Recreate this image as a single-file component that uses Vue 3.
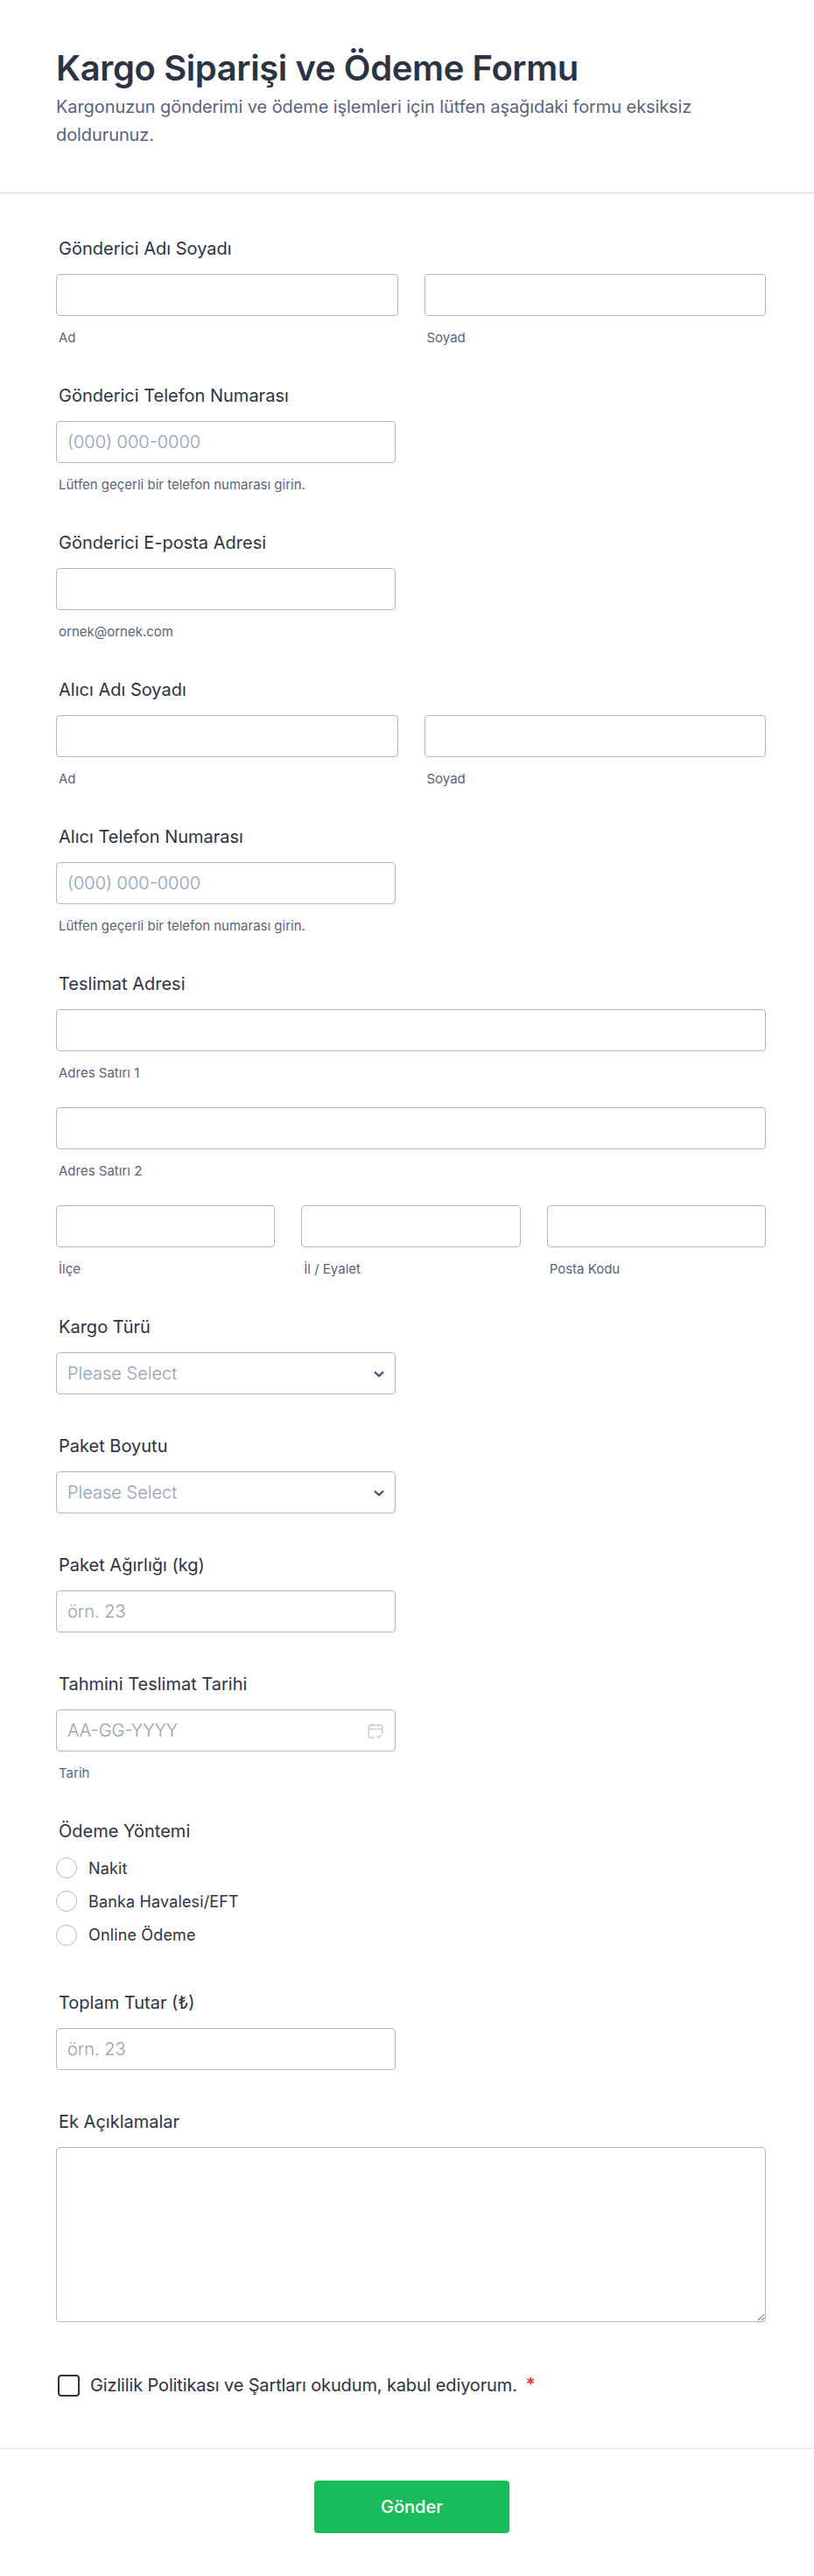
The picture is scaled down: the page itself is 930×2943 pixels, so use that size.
<template>
  <main class="form">
    <header class="form-header">
      <h1 class="form-title">Kargo Siparişi ve Ödeme Formu</h1>
      <p class="form-desc">Kargonuzun gönderimi ve ödeme işlemleri için lütfen aşağıdaki formu eksiksiz doldurunuz.</p>
    </header>

    <section class="form-body">
      <div class="field">
        <label class="field-label">Gönderici Adı Soyadı</label>
        <div class="row">
          <div v-for="s in nameParts" :key="s" class="col">
            <input class="input" type="text" />
            <span class="sub">{{ s }}</span>
          </div>
        </div>
      </div>

      <div class="field">
        <label class="field-label">Gönderici Telefon Numarası</label>
        <input class="input short" type="tel" placeholder="(000) 000-0000" />
        <span class="sub">Lütfen geçerli bir telefon numarası girin.</span>
      </div>

      <div class="field">
        <label class="field-label">Gönderici E-posta Adresi</label>
        <input class="input short" type="email" />
        <span class="sub">ornek@ornek.com</span>
      </div>

      <div class="field">
        <label class="field-label">Alıcı Adı Soyadı</label>
        <div class="row">
          <div v-for="s in nameParts" :key="s" class="col">
            <input class="input" type="text" />
            <span class="sub">{{ s }}</span>
          </div>
        </div>
      </div>

      <div class="field">
        <label class="field-label">Alıcı Telefon Numarası</label>
        <input class="input short" type="tel" placeholder="(000) 000-0000" />
        <span class="sub">Lütfen geçerli bir telefon numarası girin.</span>
      </div>

      <div class="field">
        <label class="field-label">Teslimat Adresi</label>
        <div class="address-line">
          <input class="input" type="text" />
          <span class="sub">Adres Satırı 1</span>
        </div>
        <div class="address-line">
          <input class="input" type="text" />
          <span class="sub">Adres Satırı 2</span>
        </div>
        <div class="row">
          <div v-for="s in addressParts" :key="s" class="col">
            <input class="input" type="text" />
            <span class="sub">{{ s }}</span>
          </div>
        </div>
      </div>

      <div v-for="sel in selects" :key="sel" class="field compact">
        <label class="field-label">{{ sel }}</label>
        <div class="select-wrap short">
          <select class="input select">
            <option>Please Select</option>
          </select>
          <svg class="chevron" width="14" height="10" viewBox="0 0 14 10" fill="none">
            <path d="M2 2.4 7 7.2 12 2.4" stroke="#4f5a7a" stroke-width="2.4" />
          </svg>
        </div>
      </div>

      <div class="field compact">
        <label class="field-label">Paket Ağırlığı (kg)</label>
        <input class="input short" type="text" placeholder="örn. 23" />
      </div>

      <div class="field">
        <label class="field-label">Tahmini Teslimat Tarihi</label>
        <div class="select-wrap short">
          <input class="input" type="text" placeholder="AA-GG-YYYY" />
          <svg class="calendar" width="18" height="19" viewBox="0 0 18 19" fill="none" stroke="#c3cad8" stroke-width="1.4">
            <path d="M8 17.3H2.6A1.4 1.4 0 0 1 1.2 15.9V4.4A1.4 1.4 0 0 1 2.6 3h12.8a1.4 1.4 0 0 1 1.4 1.4v8" />
            <path d="M1.2 7.4h15.6M5.4 1v3.6M12.6 1v3.6M10.8 15.4l1.8 1.8 3.6-3.6" />
          </svg>
        </div>
        <span class="sub">Tarih</span>
      </div>

      <div class="field radios">
        <label class="field-label">Ödeme Yöntemi</label>
        <label v-for="r in payments" :key="r" class="radio">
          <input type="radio" name="odeme" />
          <span>{{ r }}</span>
        </label>
      </div>

      <div class="field compact">
        <label class="field-label">Toplam Tutar (₺)</label>
        <input class="input short" type="text" placeholder="örn. 23" />
      </div>

      <div class="field compact last">
        <label class="field-label">Ek Açıklamalar</label>
        <textarea class="input area"></textarea>
      </div>

      <label class="terms">
        <input type="checkbox" />
        <span>Gizlilik Politikası ve Şartları okudum, kabul ediyorum.</span>
        <em class="req">*</em>
      </label>
    </section>

    <footer class="form-footer">
      <button class="submit" type="button">Gönder</button>
    </footer>
  </main>
</template>

<script setup>
const nameParts = ['Ad', 'Soyad'];
const addressParts = ['İlçe', 'İl / Eyalet', 'Posta Kodu'];
const selects = ['Kargo Türü', 'Paket Boyutu'];
const payments = ['Nakit', 'Banka Havalesi/EFT', 'Online Ödeme'];
</script>

<style>
html, body { background: #fff; }
</style>

<style scoped>
.form { width: 930px; font-family: Inter, "Noto Sans", sans-serif; color: #2c3345; background: #fff; }
.form-header { padding: 54px 64px 50px; border-bottom: 1px solid #dadce6; }
.form-title { margin: 0; font-size: 40px; line-height: 48px; font-weight: 600; letter-spacing: -0.4px; color: #2c3345; }
.form-desc { margin: 4px 0 0; font-size: 20px; line-height: 32px; letter-spacing: -0.09px; color: #57647e; max-width: 800px; }

.form-body { padding: 49px 55px 59px 64px; }
.field { margin-bottom: 42px; }
.field.compact { margin-bottom: 45px; }
.field.last { margin-bottom: 0; }
.field-label { display: block; padding-left: 3px; margin-bottom: 15px; font-size: 20px; line-height: 28px; font-weight: 400; color: #2c3345; }

.row { display: flex; gap: 30px; }
.col { flex: 1; min-width: 0; }
.address-line { margin-bottom: 29px; }

.input { display: block; width: 100%; height: 48px; box-sizing: border-box; padding: 0 12px; border: 1px solid #b3b8c6; border-radius: 4px; background: #fff; font: 400 20px Inter, sans-serif; color: #2c3345; outline: none; }
.input::placeholder { color: #8f9fb8; opacity: 1; font-weight: 300; }
.short { width: 388px; }
.sub { display: block; padding-left: 3px; margin-top: 15px; font-size: 15px; line-height: 20px; color: #57647e; }

.select-wrap { position: relative; }
.select { appearance: none; color: #8f9fb8; font-weight: 300; }
.chevron { position: absolute; right: 12px; top: 20px; }
.calendar { position: absolute; right: 14px; top: 15px; }

.radios { margin-bottom: 44px; }
.radios .field-label { margin-bottom: 9px; }
.radio { display: flex; align-items: center; gap: 13px; height: 38.3px; font-size: 18px; letter-spacing: 0.15px; color: #2c3345; }
.radio input { appearance: none; margin: 0; width: 24px; height: 24px; border: 1px solid #b3b8c6; border-radius: 50%; background: #fff; }

.area { height: 200px; padding: 10px 12px; resize: vertical; }

.terms { display: flex; align-items: center; margin-top: 60px; padding-left: 2px; font-size: 20px; letter-spacing: -0.14px; color: #2c3345; }
.terms input { appearance: none; margin: 0 12px 0 0; width: 25px; height: 25px; border: 2px solid #2c3345; border-radius: 4px; background: #fff; }
.req { align-self: flex-start; margin-left: 10px; font-style: normal; font-weight: 600; color: #f5281e; font-size: 20px; line-height: 22px; }

.form-footer { display: flex; justify-content: center; padding: 36px 0 43px 11px; border-top: 1px solid #e3e8f0; }
.submit { width: 223px; height: 60px; border: 0; border-radius: 4px; background: #18bd5b; color: #fff; font: 500 20px Inter, sans-serif; }
</style>
